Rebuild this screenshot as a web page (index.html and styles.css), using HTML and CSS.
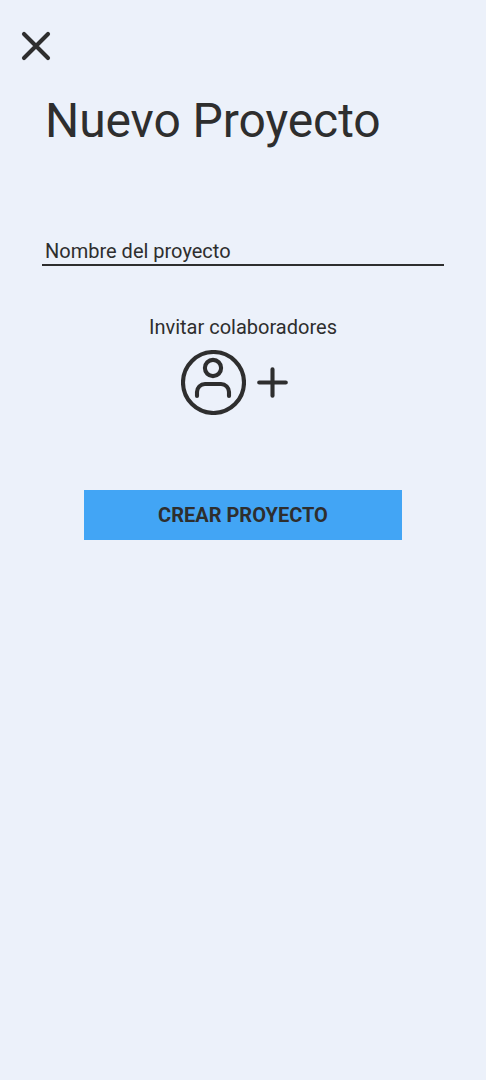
FILE: index.html
```html
<!DOCTYPE html>
<html lang="es">
<head>
<meta charset="utf-8">
<title>Nuevo Proyecto</title>
<link rel="stylesheet" href="styles.css">
</head>
<body>
<main class="screen">
  <button class="close" aria-label="Cerrar">
    <svg class="icon" width="32" height="32" viewBox="0 0 32 32"><path d="M4 4 28 28M28 4 4 28"/></svg>
  </button>
  <h1 class="title">Nuevo Proyecto</h1>
  <div class="field">Nombre del proyecto</div>
  <section class="invite">
    <p class="invite-label">Invitar colaboradores</p>
    <div class="people">
      <svg class="icon" width="65" height="65" viewBox="0 0 65 65"><circle cx="32.5" cy="32.5" r="30.5"/><circle cx="32" cy="18" r="8.1"/><path d="M16 46V42a8 8 0 0 1 8-8H40a8 8 0 0 1 8 8V46"/></svg>
      <svg class="icon" width="33" height="33" viewBox="0 0 33 33"><path d="M16.5 3.2V29.8M3.2 16.5H29.8"/></svg>
    </div>
  </section>
  <button class="submit">CREAR PROYECTO</button>
</main>
</body>
</html>
```
FILE: styles.css
```css
body {
  margin: 0;
  background: #ecf1fa;
  color: #2e2e2e;
  font-family: Roboto, sans-serif;
}

.screen {
  box-sizing: border-box;
  display: flex;
  flex-direction: column;
  min-height: 1080px;
  padding: 30px 42px 0;
}

.close {
  align-self: flex-start;
  width: 32px;
  height: 32px;
  margin-left: -22px;
  padding: 0;
  border: 0;
  background: none;
  color: inherit;
}

.icon {
  display: block;
  fill: none;
  stroke: currentColor;
  stroke-width: 4.1;
  stroke-linecap: round;
}

.title {
  margin: 31px 0 0 3px;
  font-size: 48px;
  font-weight: 400;
  line-height: 56px;
  letter-spacing: -0.08px;
}

.field {
  box-sizing: border-box;
  height: 28px;
  margin-top: 89px;
  padding-left: 3px;
  border-bottom: 2px solid #2e2e2e;
  font-size: 20px;
  line-height: 26px;
}

.invite {
  display: flex;
  flex-direction: column;
  align-items: center;
  margin-top: 49px;
}

.invite-label {
  margin: 0;
  font-size: 20px;
  line-height: 24px;
}

.people {
  display: flex;
  align-items: center;
  gap: 10px;
  margin: 11px 16px 0 0;
}

.submit {
  align-self: center;
  width: 318px;
  height: 50px;
  margin-top: 75px;
  padding: 0;
  border: 0;
  background: #42a5f5;
  color: inherit;
  font: 700 20px/50px Roboto, sans-serif;
}
```
